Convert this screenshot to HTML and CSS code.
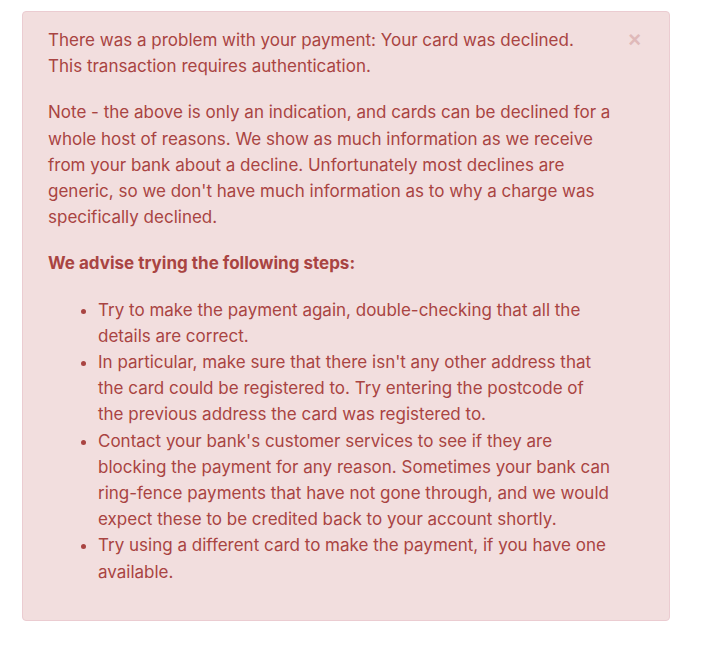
FILE: index.html
```html
<!DOCTYPE html>
<html lang="en">
<head>
    <meta charset="UTF-8">
    <meta name="viewport" content="width=device-width, initial-scale=1.0">
    <title>Payment problem</title>
    <link rel="stylesheet" href="styles.css">
</head>
<body>

<div class="alert alert-danger">
    <button type="button" class="close" aria-label="Close">&times;</button>
    <p>There was a problem with your payment: Your card was declined.<br>This transaction requires authentication.</p>
    <p>Note - the above is only an indication, and cards can be declined for a whole host of reasons. We show as much information as we receive from your bank about a decline. Unfortunately most declines are generic, so we don't have much information as to why a charge was specifically declined.</p>
    <p><strong>We advise trying the following steps:</strong></p>
    <ul>
        <li>Try to make the payment again, double-checking that all the details are correct.</li>
        <li>In particular, make sure that there isn't any other address that the card could be registered to. Try entering the postcode of the previous address the card was registered to.</li>
        <li>Contact your bank's customer services to see if they are blocking the payment for any reason. Sometimes your bank can ring-fence payments that have not gone through, and we would expect these to be credited back to your account shortly.</li>
        <li>Try using a different card to make the payment, if you have one available.</li>
    </ul>
</div>

</body>
</html>
```

FILE: styles.css
```css
* {
    margin: 0;
    padding: 0;
    box-sizing: border-box;
}

body {
    font-family: 'Inter', 'Liberation Sans', sans-serif;
    font-size: 17px;
    line-height: 26.2px;
    background-color: #fff;
    padding: 11px 0 0 22px;
}

.alert {
    position: relative;
    width: 648px;
    padding: 15px 55px 25px 25px;
    border: 1px solid #ebccd1;
    border-radius: 4px;
    background-color: #f2dede;
    color: #a94442;
}

.alert p {
    margin-bottom: 20px;
}

.alert strong {
    font-weight: bold;
}

.alert ul {
    padding-left: 50px;
    margin-bottom: 10px;
}

.close {
    position: absolute;
    top: 15px;
    right: 28px;
    background: none;
    border: 0;
    font-family: 'Liberation Sans', sans-serif;
    font-size: 22px;
    font-weight: bold;
    line-height: 26px;
    color: #dfb9b9;
    cursor: pointer;
}
```
